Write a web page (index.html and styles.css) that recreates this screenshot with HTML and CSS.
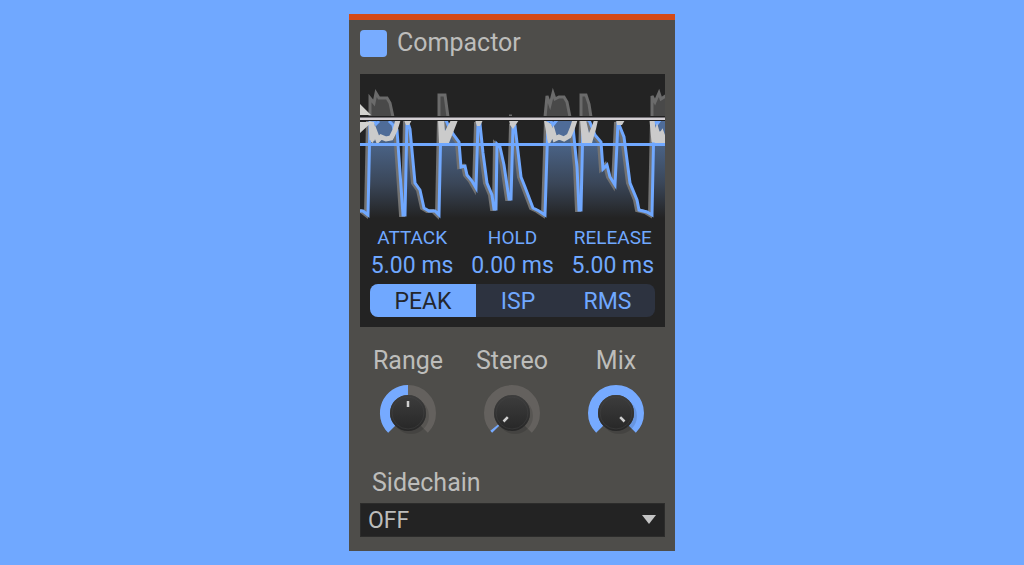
FILE: index.html
```html
<!DOCTYPE html>
<html lang="en">
<head>
<meta charset="utf-8">
<meta name="viewport" content="width=device-width, initial-scale=1">
<title>Compactor</title>
<link rel="stylesheet" href="styles.css">
</head>
<body>
<main class="panel">
  <label class="title">
    <input class="power" type="checkbox" checked>
    <span>Compactor</span>
  </label>

  <section class="display">
    <svg class="wave" viewBox="0 0 305 148" aria-hidden="true">
      <defs>
        <linearGradient id="fill" x1="0" y1="46" x2="0" y2="144" gradientUnits="userSpaceOnUse">
          <stop offset="0" stop-color="#547099"/>
          <stop offset=".3" stop-color="#485f80"/>
          <stop offset=".65" stop-color="#3a4658"/>
          <stop offset="1" stop-color="#232323"/>
        </linearGradient>
        <clipPath id="below"><rect x="0" y="47" width="305" height="101"/></clipPath>
        <path id="trace" d="M-4 137H3L8 141L10 46L34 46L37 56L43 141H45L47 46L50 55L55 109L60 116L64 134L69 137H75L79 141L81 46H86L88 51L93 60L99 68L101 93L105 92L107 101L112 107L116 114L118 50H120L123 79L127 109L132 121L134 135H136L137 70L140 73L144 91L149 125H151L153 52H155L161 103L165 113L173 134L179 137L185 141L188 46H211L213 53L217 93L219 136H221L223 46H229L235 61L241 68L243 95L247 91L250 103L255 111L258 48L264 63L270 109L277 126L279 136L287 138L292 141L294 46H309"/>
      </defs>
      <g clip-path="url(#below)">
        <path fill="url(#fill)" d="M0 137L8 141L10 46L34 46L37 56L43 141H45L47 46L50 55L55 109L60 116L64 134L69 137H75L79 141L81 46H86L88 51L93 60L99 68L101 93L105 92L107 101L112 107L116 114L118 50H120L123 79L127 109L132 121L134 135H136L137 70L140 73L144 91L149 125H151L153 52H155L161 103L165 113L173 134L179 137L185 141L188 46H211L213 53L217 93L219 136H221L223 46H229L235 61L241 68L243 95L247 91L250 103L255 111L258 48L264 63L270 109L277 126L279 136L287 138L292 141L294 46H305V148H0Z"/>
        <use href="#trace" x="-2" fill="none" stroke="#727272" stroke-width="4"/>
        <use href="#trace" fill="none" stroke="#70a8ff" stroke-width="3"/>
        <path fill="#4f6c98" d="M12 46L17 60L26 66L35 57L38 46ZM190 46L196 60L204 66L211 55L214 46ZM297 46L300 55L305 60V46Z"/>
        <path fill="none" stroke="#70a8ff" stroke-width="3" d="M13 46L16 50L19 47M29 47L33 51L34 56M190 46L193 51L197 46M294 46L297 50L300 46"/>
        <path fill="none" stroke="#cbcbcb" stroke-width="5" d="M11 50L12 66L15 58L18 66L21 63L26 65L31 64L35 56L38 46M188 50L190 64L193 58L195 65L199 63L204 65L209 62L212 55L215 46M292 46L294 68L297 58L299 65L302 60L305 68"/>
        <path fill="#cbcbcb" d="M9 47L14 48L16 58L13 69L11 68ZM78 46H84L85 57L91 46H98L89 69H79ZM44 46H52L49 51H46ZM115 46H123L120 52H117ZM149 46H159L153 55L150 51ZM184 46L191 50L195 60L188 69ZM220 46H226L229 59L232 52L234 46H238L236 55L232 69H222ZM256 46H265L262 51H257ZM293 46L297 58L302 57L305 64V70H295Z"/>
      </g>
      <g fill="#494949" stroke="#6b6b6b" stroke-width="3">
        <path d="M10 43V24L14 29L16 19L19 24H27L30 29L33 43"/>
        <path d="M79 43V21H85L88 43"/>
        <path d="M185 43L187 22L190 31L193 19L195 25L199 23H204L207 28L210 43"/>
        <path d="M221 43V21H226L229 30L231 43"/>
        <path d="M292 43V22L295 28L299 19L301 25L307 21V43"/>
        <path d="M149 42H152"/>
      </g>
      <path fill="#202020" d="M0 42H305V47H0Z"/>
      <path fill="#77757a" d="M0 43H305V44H0Z"/>
      <path fill="#d4d0d4" d="M0 44H305V46H0Z"/>
      <path fill="#70a8ff" d="M0 69H305V72H0Z"/>
      <path fill="#d3d3d0" d="M0 30V41H11ZM0 48V59L12 48Z"/>
    </svg>

    <div class="times">
      <label class="time"><span>ATTACK</span><input type="text" value="5.00 ms"></label>
      <label class="time"><span>HOLD</span><input type="text" value="0.00 ms"></label>
      <label class="time"><span>RELEASE</span><input type="text" value="5.00 ms"></label>
    </div>

    <div class="modes" role="radiogroup" aria-label="Detection">
      <label class="mode mode-peak"><input type="radio" name="mode" checked><span>PEAK</span></label>
      <label class="mode mode-isp"><input type="radio" name="mode"><span>ISP</span></label>
      <label class="mode mode-rms"><input type="radio" name="mode"><span>RMS</span></label>
    </div>
  </section>

  <section class="knobs">
    <label class="knob">
      <span>Range</span>
      <span class="dial">
        <svg viewBox="0 0 60 60" aria-hidden="true">
          <defs>
            <linearGradient id="cap" x1="0" y1="0" x2="0" y2="1">
              <stop offset="0" stop-color="#3d3d3d"/>
              <stop offset="1" stop-color="#272727"/>
            </linearGradient>
          </defs>
          <path class="track" d="M13.7 46.3A23 23 0 1 1 46.3 46.3"/>
          <path class="value" d="M13.7 46.3A23 23 0 0 1 30 7"/>
          <circle class="shade" cx="33" cy="33" r="18"/>
          <circle cx="30" cy="30" r="18" fill="url(#cap)"/>
          <circle class="rim" cx="30" cy="30" r="16"/>
          <path class="hand" d="M30 24V18"/>
        </svg>
        <input type="range" min="0" max="100" value="50">
      </span>
    </label>
    <label class="knob">
      <span>Stereo</span>
      <span class="dial">
        <svg viewBox="0 0 60 60" aria-hidden="true">
          <path class="track" d="M13.7 46.3A23 23 0 1 1 46.3 46.3"/>
          <path class="value" d="M13.7 46.3A23 23 0 0 1 12.2 44.6"/>
          <circle class="shade" cx="33" cy="33" r="18"/>
          <circle cx="30" cy="30" r="18" fill="url(#cap)"/>
          <circle class="rim" cx="30" cy="30" r="16"/>
          <path class="hand" d="M25.8 34.2L21.5 38.5"/>
        </svg>
        <input type="range" min="0" max="100" value="0">
      </span>
    </label>
    <label class="knob">
      <span>Mix</span>
      <span class="dial">
        <svg viewBox="0 0 60 60" aria-hidden="true">
          <path class="value" d="M13.7 46.3A23 23 0 1 1 46.3 46.3"/>
          <circle class="shade" cx="33" cy="33" r="18"/>
          <circle cx="30" cy="30" r="18" fill="url(#cap)"/>
          <circle class="rim" cx="30" cy="30" r="16"/>
          <path class="hand" d="M34.2 34.2L38.5 38.5"/>
        </svg>
        <input type="range" min="0" max="100" value="100">
      </span>
    </label>
  </section>

  <section class="sidechain">
    <label for="sidechain">Sidechain</label>
    <div class="picker">
      <select id="sidechain"><option>OFF</option></select>
      <svg class="arrow" viewBox="0 0 14 9" aria-hidden="true"><path d="M0 0H14L7 9Z"/></svg>
    </div>
  </section>
</main>
</body>
</html>
```

FILE: styles.css
```css
* { box-sizing: border-box; }

body {
  margin: 0;
  min-height: 100vh;
  display: flex;
  align-items: center;
  justify-content: center;
  background: #70a8ff;
  color: #bdbdbb;
  font-family: Roboto, "Liberation Sans", sans-serif;
  font-size: 25px;
  line-height: 30px;
}

input, select {
  margin: 0;
  font: inherit;
  color: inherit;
}

.panel {
  width: 30%;
  min-width: 326px;
  padding: 8px 10px 14px 11px;
  border-top: 6px solid #d34a17;
  background: #4e4d4a;
}

.title {
  display: flex;
  align-items: center;
  gap: 10px;
}

.power {
  appearance: none;
  width: 27px;
  height: 27px;
  border-radius: 4px;
  background: #78acff;
}

.display {
  margin-top: 16px;
  padding-bottom: 10px;
  background: #232323;
  color: #70a8ff;
}

.wave {
  display: block;
  width: 100%;
}

.times {
  display: grid;
  grid-template-columns: repeat(3, 1fr);
  padding: 4px 2px 0;
}

.time {
  display: flex;
  flex-direction: column;
  align-items: center;
  font-size: 19px;
  line-height: 24px;
}

.time input {
  width: 100%;
  height: 30px;
  padding: 0;
  border: 0;
  background: none;
  font-size: 23px;
  text-align: center;
}

.modes {
  display: flex;
  height: 33px;
  margin: 4px 10px 0;
  border-radius: 8px;
  overflow: hidden;
  background: #2d3340;
  font-size: 23px;
}

.mode {
  position: relative;
  display: flex;
  align-items: center;
  justify-content: center;
  padding-top: 2px;
}

.mode-peak { flex: 106; }
.mode-isp { flex: 84; }
.mode-rms { flex: 95; }

.mode input {
  position: absolute;
  inset: 0;
  width: 100%;
  height: 100%;
  opacity: 0;
}

.mode:has(:checked) {
  background: #70a8ff;
  color: #23262c;
}

.knobs {
  display: flex;
  justify-content: space-between;
  padding: 19px 9px 0 8px;
}

.knob {
  display: flex;
  flex-direction: column;
  align-items: center;
  width: 80px;
  gap: 7px;
}

.dial {
  position: relative;
  width: 60px;
  height: 60px;
}

.dial svg { display: block; }

.dial input {
  position: absolute;
  inset: 0;
  width: 100%;
  height: 100%;
  opacity: 0;
}

.track, .value, .rim, .hand { fill: none; }
.track { stroke: #64615e; stroke-width: 10; }
.value { stroke: #76aaff; stroke-width: 10; }
.shade { fill: #000; opacity: .12; }
.rim { stroke: #434343; opacity: .5; }
.hand { stroke: #d0d0d0; stroke-width: 2.5; }

.sidechain { margin-top: 25px; }

.sidechain label {
  display: block;
  padding-left: 12px;
}

.picker {
  position: relative;
  margin-top: 5px;
}

.picker select {
  display: block;
  width: 100%;
  height: 34px;
  padding: 2px 7px 0;
  appearance: none;
  border: 1px solid #2c2c2b;
  border-radius: 0;
  background: #232323;
  font-size: 23px;
}

.arrow {
  position: absolute;
  top: 12px;
  right: 9px;
  width: 14px;
  fill: #c4c4c4;
  pointer-events: none;
}
```
